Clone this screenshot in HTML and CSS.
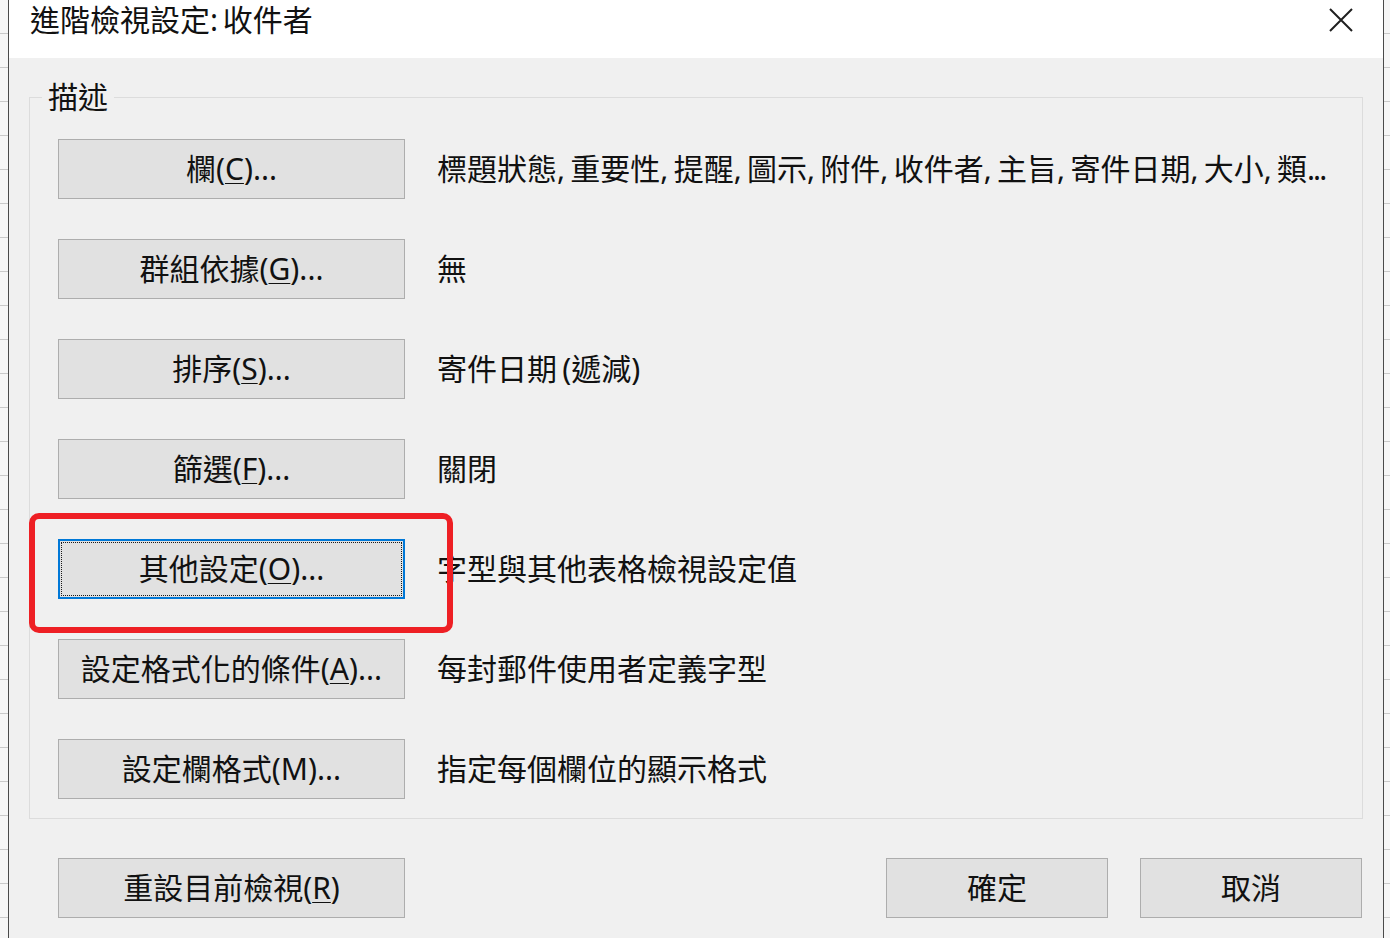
FILE: index.html
```html
<!DOCTYPE html>
<html lang="zh-Hant">
<head>
<meta charset="utf-8">
<title>進階檢視設定: 收件者</title>
<link rel="stylesheet" href="styles.css">
</head>
<body>
<div class="screen">
  <div class="strip strip-left"></div>
  <div class="dialog">
    <div class="titlebar">
      <span class="title">進階檢視設定: 收件者</span>
      <button class="close" aria-label="關閉">
        <svg width="24" height="24" viewBox="0 0 24 24"><path d="M1 1 L23 23 M23 1 L1 23" stroke="#1f1f1f" stroke-width="2" fill="none"/></svg>
      </button>
    </div>
    <div class="content">
      <fieldset class="group">
        <legend>描述</legend>
        <div class="rows">
          <div class="row">
            <button class="btn btn-wide">欄(<u>C</u>)...</button>
            <span class="desc">標題狀態, 重要性, 提醒, 圖示, 附件, 收件者, 主旨, 寄件日期, 大小, 類<span class="dots">...</span></span>
          </div>
          <div class="row">
            <button class="btn btn-wide">群組依據(<u>G</u>)...</button>
            <span class="desc">無</span>
          </div>
          <div class="row">
            <button class="btn btn-wide">排序(<u>S</u>)...</button>
            <span class="desc">寄件日期 (遞減)</span>
          </div>
          <div class="row">
            <button class="btn btn-wide">篩選(<u>F</u>)...</button>
            <span class="desc">關閉</span>
          </div>
          <div class="row row-marked">
            <button class="btn btn-wide btn-focus">其他設定(<u>O</u>)...</button>
            <span class="desc">字型與其他表格檢視設定值</span>
            <div class="highlight"></div>
          </div>
          <div class="row">
            <button class="btn btn-wide">設定格式化的條件(<u>A</u>)...</button>
            <span class="desc">每封郵件使用者定義字型</span>
          </div>
          <div class="row">
            <button class="btn btn-wide">設定欄格式(M)...</button>
            <span class="desc">指定每個欄位的顯示格式</span>
          </div>
        </div>
      </fieldset>
      <div class="footer">
        <button class="btn btn-wide">重設目前檢視(<u>R</u>)</button>
        <div class="footer-right">
          <button class="btn btn-small">確定</button>
          <button class="btn btn-small">取消</button>
        </div>
      </div>
    </div>
  </div>
  <div class="strip strip-right"></div>
</div>
</body>
</html>
```
FILE: styles.css
```css
* { box-sizing: border-box; }

html, body {
  margin: 0;
  padding: 0;
  width: 1390px;
  height: 938px;
  overflow: hidden;
  background: #f4f4f4;
}

body {
  font-family: "Noto Sans", "Noto Sans CJK TC", sans-serif;
  color: #111;
}

.screen {
  display: flex;
  width: 1390px;
  height: 938px;
}

.strip {
  flex: none;
  height: 938px;
  background-color: #f6f6f6;
  background-image: repeating-linear-gradient(to bottom, transparent 0, transparent 33px, #c9c9c9 33px, #c9c9c9 34px);
}
.strip-left { width: 8px; }
.strip-right { width: 6px; }

.dialog {
  flex: none;
  width: 1376px;
  height: 938px;
  border-left: 1px solid #4a4a4a;
  border-right: 1px solid #4a4a4a;
  background: #f0f0f0;
  display: flex;
  flex-direction: column;
}

.titlebar {
  flex: none;
  height: 58px;
  background: #ffffff;
  display: flex;
  align-items: flex-start;
  padding-left: 21px;
}

.title {
  font-size: 30px;
  line-height: 40px;
  word-spacing: -3px;
  color: #111;
  white-space: nowrap;
}

.close {
  margin-left: auto;
  margin-top: 8px;
  margin-right: 30px;
  width: 24px;
  height: 24px;
  padding: 0;
  border: 0;
  background: transparent;
  display: block;
}
.close svg { display: block; }

.content {
  flex: 1;
  padding: 21px 20px 0 20px;
}

.group {
  margin: 0;
  min-width: 0;
  border: 1px solid #dcdcdc;
  padding: 0;
}

.group legend {
  margin-left: 12px;
  padding: 0 6px;
  font-size: 30px;
  line-height: 36px;
  color: #111;
}

.rows {
  display: flex;
  flex-direction: column;
  gap: 40px;
  padding: 24px 0 19px 28px;
}

.row {
  position: relative;
  display: flex;
  align-items: center;
  gap: 32px;
  height: 60px;
}

.btn {
  flex: none;
  height: 60px;
  margin: 0;
  padding: 0;
  background: #e1e1e1;
  border: 1px solid #adadad;
  border-radius: 0;
  font-family: "Noto Sans", "Noto Sans CJK TC", sans-serif;
  font-size: 30px;
  line-height: 1;
  color: #111;
  display: flex;
  align-items: center;
  justify-content: center;
  white-space: nowrap;
}
.btn u {
  text-decoration-thickness: 1px;
  text-underline-offset: 3px;
}

.btn-wide { width: 347px; }
.btn-small { width: 222px; }

.btn-focus {
  border: 2px solid #0078d7;
  outline: 1px dotted #1a1a1a;
  outline-offset: -4px;
}

.desc {
  font-size: 30px;
  line-height: 40px;
  word-spacing: -2.5px;
  white-space: nowrap;
  color: #111;
}

.dots {
  letter-spacing: -2px;
}

.highlight {
  position: absolute;
  top: -26px;
  left: -29px;
  width: 424px;
  height: 120px;
  border: 6px solid #ee1f24;
  border-radius: 10px;
  pointer-events: none;
  z-index: 2;
}

.footer {
  display: flex;
  align-items: center;
  margin-top: 39px;
  padding-left: 29px;
  padding-right: 1px;
}

.footer-right {
  margin-left: auto;
  display: flex;
  gap: 32px;
}
```
